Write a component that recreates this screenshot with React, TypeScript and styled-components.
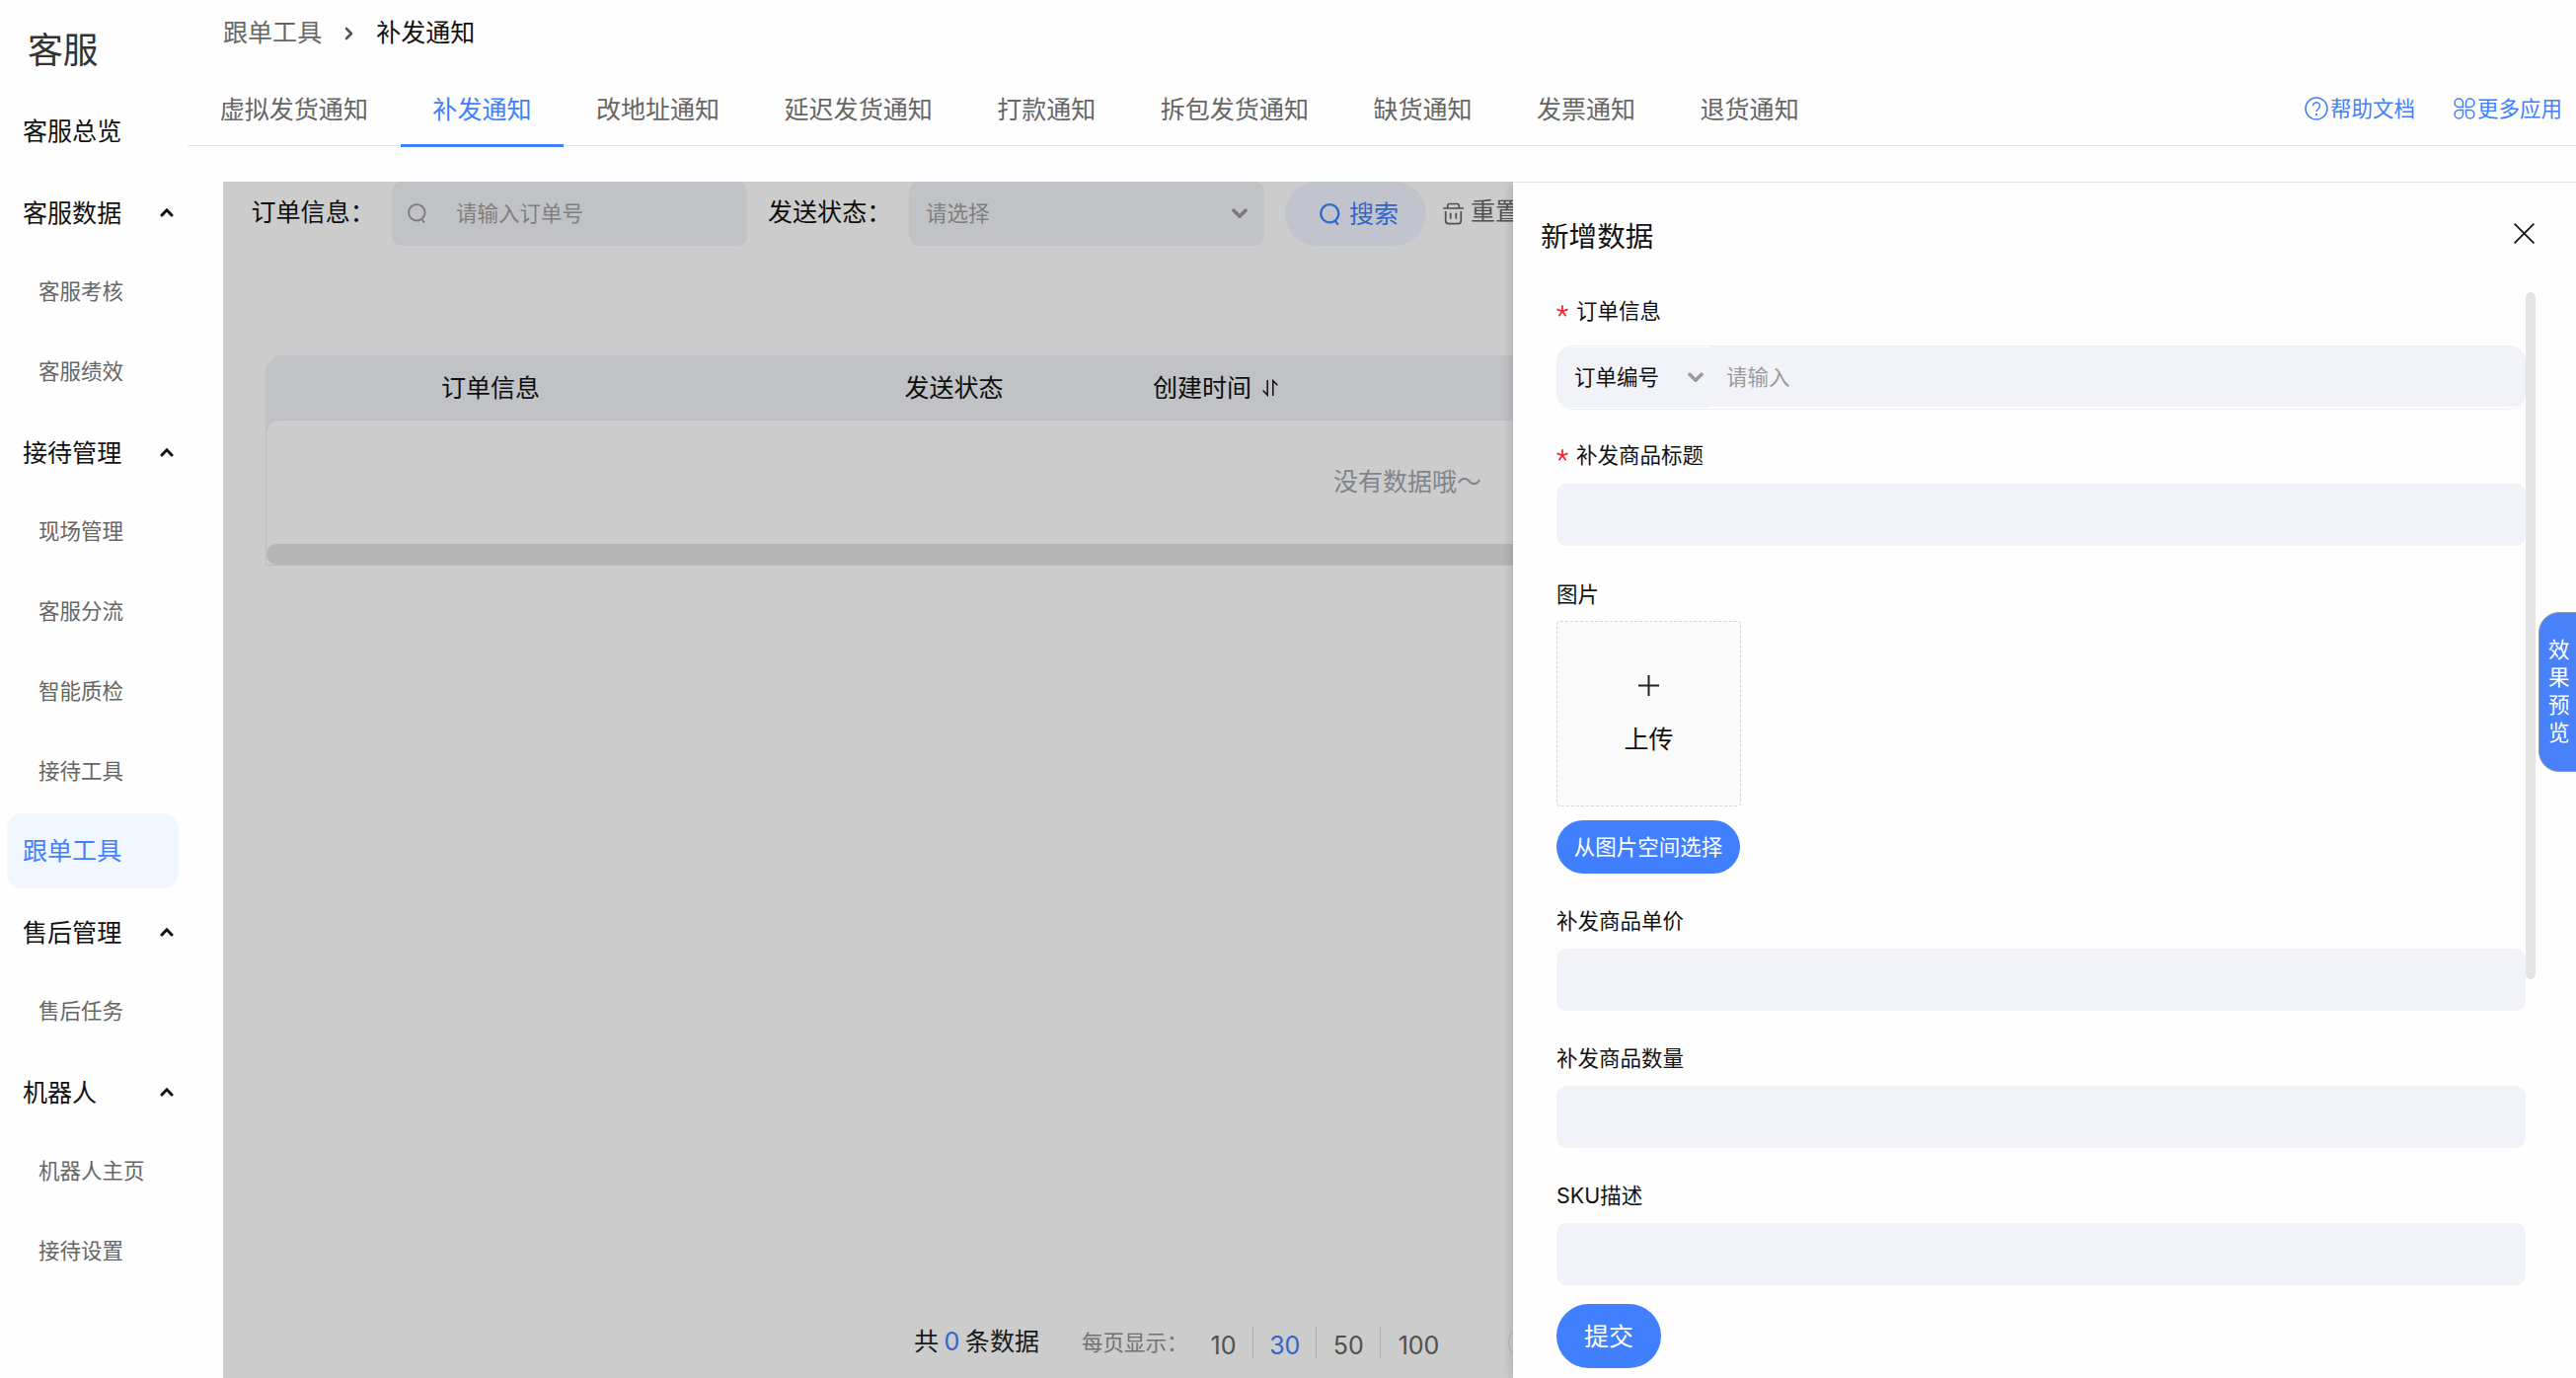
import React from "react";
import styled, { createGlobalStyle } from "styled-components";

const BLUE = "#4080ff";
const INK = "#111111";
const FIELD = "#f2f3f8";

const GlobalStyle = createGlobalStyle`
  * { box-sizing: border-box; }
  html, body { margin: 0; padding: 0; background: #fff; }
  body {
    font-family: Inter, "Noto Sans CJK SC", sans-serif;
    line-height: 1.4;
    color: ${INK};
    overflow: hidden;
  }
  button { font-family: inherit; line-height: inherit; border: 0; padding: 0; }
  svg { display: block; flex: none; }
`;

const Page = styled.div`
  position: relative;
  display: flex;
  width: 2610px;
  height: 1396px;
  background: #fefefe;
  overflow: hidden;
`;

/* ---------- sidebar ---------- */

const Sidebar = styled.aside`
  width: 190px;
  flex: none;
  padding-left: 7px;
`;

const SidebarTitle = styled.h1`
  margin: 0;
  height: 92.5px;
  padding-left: 21px;
  font-size: 35.8px;
  font-weight: 400;
  line-height: 102px;
  color: #333;
`;

const navPadding = {
  top: "2px 0 0 16px",
  group: "5px 5px 0 16px",
  leaf: "0 0 0 32px",
  active: "1px 0 0 16px",
};

const NavItem = styled.div<{ $kind: "top" | "group" | "leaf" | "active" }>`
  display: flex;
  align-items: center;
  justify-content: space-between;
  width: 174px;
  height: 76px;
  margin: 2.52px 0;
  padding: ${(p) => navPadding[p.$kind]};
  border-radius: 16px;
  white-space: nowrap;
  font-size: ${(p) => (p.$kind === "leaf" ? "21.5px" : "25.06px")};
  color: ${(p) => (p.$kind === "leaf" ? "#666" : p.$kind === "active" ? BLUE : INK)};
  background: ${(p) => (p.$kind === "active" ? "#f2f6ff" : "transparent")};
  svg { margin-top: -4px; }
`;

const NavList = styled.nav`
  display: flex;
  flex-direction: column;
`;

/* ---------- header ---------- */

const Main = styled.main`
  flex: 1;
  min-width: 0;
  display: flex;
  flex-direction: column;
`;

const Breadcrumb = styled.div`
  display: flex;
  align-items: center;
  height: 68px;
  padding-left: 36px;
  font-size: 25.06px;
  color: #666;
`;

const Crumb = styled.span<{ $current?: boolean }>`
  color: ${(p) => (p.$current ? INK : "#666")};
`;

const CrumbArrow = styled.span`
  width: 55px;
  display: flex;
  justify-content: center;
`;

const TabBar = styled.div`
  display: flex;
  align-items: flex-start;
  height: 80px;
  border-bottom: 1px solid #e5e6e8;
`;

const Tab = styled.div<{ $active?: boolean }>`
  height: 81px;
  padding: 0 32.7px;
  line-height: 87px;
  font-size: 25.06px;
  white-space: nowrap;
  color: ${(p) => (p.$active ? BLUE : "#666")};
  border-bottom: 3px solid ${(p) => (p.$active ? BLUE : "transparent")};
`;

const Links = styled.div`
  display: flex;
  gap: 39px;
  margin-left: auto;
  padding-right: 14px;
`;

const HelpLink = styled.a`
  display: flex;
  align-items: center;
  gap: 2px;
  height: 84px;
  font-size: 21.5px;
  white-space: nowrap;
  color: ${BLUE};
`;

/* ---------- workspace ---------- */

const Workspace = styled.section`
  position: relative;
  flex: 1;
  margin: 36px 0 0 36px;
  display: flex;
  flex-direction: column;
  overflow: hidden;
  background: #fff;
`;

const Filters = styled.div`
  display: flex;
  align-items: flex-start;
  height: 176px;
  padding-left: 28.5px;
  white-space: nowrap;
`;

const FilterLabel = styled.label<{ $width: number }>`
  width: ${(p) => p.$width}px;
  line-height: 63px;
  font-size: 25.06px;
`;

const FilterInput = styled.div<{ $select?: boolean }>`
  display: flex;
  align-items: center;
  justify-content: ${(p) => (p.$select ? "space-between" : "flex-start")};
  gap: 30px;
  width: 360px;
  height: 65px;
  margin-right: 21px;
  padding: 0 17px 0 ${(p) => (p.$select ? 17 : 16)}px;
  border-radius: 10px;
  font-size: 21.5px;
  background: ${FIELD};
  color: #9f9f9f;
`;

const SearchButton = styled.button`
  display: flex;
  align-items: center;
  justify-content: center;
  gap: 9px;
  width: 143px;
  height: 65px;
  padding: 1px 0 0 7px;
  border-radius: 33px;
  font-size: 25px;
  background: #f2f6ff;
  color: ${BLUE};
`;

const ResetButton = styled.button`
  display: flex;
  align-items: center;
  gap: 7px;
  height: 61px;
  margin-left: 17px;
  font-size: 25px;
  color: #666;
  background: none;
  svg { margin-top: 3px; }
`;

const Table = styled.div`
  width: 2314px;
  margin-left: 43px;
  border-radius: 18px 18px 0 0;
  background: ${FIELD};
`;

const HeadRow = styled.div`
  display: grid;
  grid-template-columns: 543px 309px 221px;
  height: 65px;
  padding-top: 2px;
  align-items: center;
  font-size: 25.06px;
`;

const HeadCell = styled.div`
  display: flex;
  align-items: center;
  justify-content: center;
  gap: 11px;
  white-space: nowrap;
  &:first-child { padding-right: 87px; }
`;

const TableBody = styled.div`
  display: flex;
  flex-direction: column;
  justify-content: space-between;
  height: 148px;
  border: 1px solid #ededf2;
  border-radius: 14px 14px 0 0;
  background: #fff;
`;

const EmptyText = styled.div`
  text-align: center;
  line-height: 125px;
  font-size: 25px;
  color: #a3a5b0;
`;

const ScrollThumb = styled.div`
  height: 21px;
  border-radius: 11px;
  background: #e3e3e3;
`;

const Pager = styled.div`
  display: flex;
  align-items: center;
  margin-top: auto;
  height: 36px;
  margin-bottom: 18px;
  padding-left: 700px;
  white-space: nowrap;
`;

const Total = styled.div`
  width: 170px;
  font-size: 25.06px;
  color: #222;
  em { font-style: normal; color: ${BLUE}; margin: 0 5.5px; }
`;

const PageSizeLabel = styled.div`
  width: 113.5px;
  font-size: 21.5px;
  color: #8f8f8f;
`;

const PageSize = styled.div<{ $width: number; $active?: boolean; $last?: boolean }>`
  width: ${(p) => p.$width}px;
  height: 32px;
  padding: 2px 0 0 1px;
  line-height: 34px;
  text-align: center;
  font-size: 25px;
  color: ${(p) => (p.$active ? BLUE : "#666")};
  border-right: 1px solid ${(p) => (p.$last ? "transparent" : "#dcdcdc")};
`;

const PageButton = styled.div`
  width: 36px;
  height: 36px;
  margin-left: 51px;
  border: 1px solid #e8e8e8;
  border-radius: 50%;
`;

const Mask = styled.div`
  position: absolute;
  inset: 0;
  background: rgba(0, 0, 0, 0.2);
`;

/* ---------- drawer ---------- */

const Drawer = styled.section`
  position: absolute;
  top: 0;
  right: 0;
  bottom: 0;
  width: 1077px;
  border-top: 1px solid #e5e6e8;
  background: #fefefe;
  box-shadow: -2px 0 10px rgba(0, 0, 0, 0.14);
`;

const DrawerHead = styled.header`
  display: flex;
  align-items: center;
  justify-content: space-between;
  height: 111px;
  padding: 0 42px 0 28px;
  font-size: 28.6px;
  svg { margin-top: -8px; }
`;

const DrawerBody = styled.div`
  display: grid;
  grid-template-columns: 982px 10px;
  padding-left: 44px;
`;

const DrawerThumb = styled.div`
  height: 696px;
  border-radius: 5px;
  background: #e3e3e3;
`;

const Form = styled.form`
  display: flex;
  flex-direction: column;
  align-items: flex-start;
`;

const Field = styled.div<{ $before?: number }>`
  width: 100%;
  margin-top: ${(p) => p.$before ?? 0}px;
`;

const Label = styled.label<{ $after: number }>`
  display: flex;
  align-items: center;
  height: 40px;
  padding-bottom: 2px;
  margin-bottom: ${(p) => p.$after}px;
  font-size: 21.5px;
  white-space: nowrap;
`;

const Required = styled.span`
  width: 20px;
  flex: none;
  svg { margin-top: -1px; }
`;

const TextBox = styled.div`
  height: 63px;
  border-radius: 10px;
  background: ${FIELD};
`;

const Combo = styled.div`
  display: flex;
  height: 65px;
  border: 1px solid #eeeff5;
  border-radius: 16px;
  font-size: 21.5px;
  background: #fff;
  overflow: hidden;
`;

const ComboSelect = styled.div`
  display: flex;
  align-items: center;
  justify-content: space-between;
  width: 154px;
  height: 61px;
  margin-top: 1px;
  padding: 0 6px 0 17px;
  background: ${FIELD};
`;

const ComboInput = styled.div`
  flex: 1;
  height: 61px;
  padding-left: 17px;
  line-height: 63px;
  border-radius: 0 12px 12px 0;
  background: ${FIELD};
  color: #9c9c9c;
`;

const Upload = styled.div`
  display: flex;
  flex-direction: column;
  align-items: center;
  gap: 25px;
  width: 187px;
  height: 188px;
  padding-top: 54px;
  border: 1px dashed #d6d6d6;
  border-radius: 4px;
  background: #fafafa;
  font-size: 25px;
  line-height: 38px;
`;

const PrimaryButton = styled.button<{ $large?: boolean }>`
  display: block;
  width: ${(p) => (p.$large ? 106 : 186)}px;
  height: ${(p) => (p.$large ? 65 : 54)}px;
  margin-top: ${(p) => (p.$large ? 19 : 14)}px;
  padding-top: ${(p) => (p.$large ? 1 : 0)}px;
  border-radius: 33px;
  white-space: nowrap;
  font-size: ${(p) => (p.$large ? 25 : 21.5)}px;
  color: #fff;
  background: ${BLUE};
`;

const PreviewHandle = styled.div`
  position: absolute;
  right: -1px;
  top: 620px;
  width: 39px;
  height: 162px;
  padding: 23px 8px 0 9px;
  border: 1px solid #8f99a8;
  border-radius: 21px 0 0 21px;
  font-size: 21.5px;
  line-height: 28px;
  color: #fff;
  background: #4881fa;
  word-break: break-all;
`;

/* ---------- icons ---------- */

const UpArrow = () => (
  <svg width="14" height="10" viewBox="0 0 14 10" fill="none">
    <path d="M2 8l5-5.2L12 8" stroke="#111" strokeWidth="3" strokeLinecap="round" />
  </svg>
);

const DownArrow = () => (
  <svg width="16" height="11" viewBox="0 0 16 11" fill="none">
    <path d="M2 2.2l6 6 6-6" stroke="#9a9a9a" strokeWidth="3.6" strokeLinecap="round" strokeLinejoin="round" />
  </svg>
);

const RightArrow = () => (
  <svg width="10" height="14" viewBox="0 0 10 14" fill="none">
    <path d="M2 2l5 5-5 5" stroke="#555" strokeWidth="2.6" strokeLinecap="round" strokeLinejoin="round" />
  </svg>
);

const SearchIcon = ({ size, color, stroke }: { size: number; color: string; stroke: number }) => (
  <svg width={size} height={size * 1.06} viewBox="0 0 21 22.3" fill="none" stroke={color} strokeWidth={stroke}>
    <circle cx="10.3" cy="10.3" r="9.1" />
    <path d="M15.2 17.2l3.6 4.6" />
  </svg>
);

const TrashIcon = () => (
  <svg width="21" height="23" viewBox="0 0 21 23" fill="none" stroke="#666" strokeWidth="1.7">
    <path d="M0 6h21M4.7 6V3.6Q4.7 1.5 6.8 1.5h7.4Q16.3 1.5 16.3 3.6V6M2.7 9v9.6Q2.7 21.7 5.7 21.7h9.6Q18.3 21.7 18.3 18.6V9M7.7 10.8v6M13.3 10.8v6" />
  </svg>
);

const SortIcon = () => (
  <svg width="16" height="18" viewBox="0 0 16 18" fill="none" stroke="#111" strokeWidth="1.5">
    <path d="M5.2 1v15.3L.6 11.6M10.8 17V1.7L15.4 6.2" />
  </svg>
);

const HelpIcon = () => (
  <svg width="24" height="24" viewBox="0 0 24 24" fill="none" stroke={BLUE} strokeWidth="1.5">
    <circle cx="12" cy="12" r="11" />
    <path d="M8.5 9.3a3.5 3.5 0 1 1 5.7 2.7c-1.3 1-2.2 1.5-2.2 3.2" />
    <path d="M12 17v2" strokeWidth="1.9" />
  </svg>
);

const AppsIcon = () => (
  <svg width="22" height="22" viewBox="0 0 22 22" fill="none" stroke={BLUE} strokeWidth="1.5">
    <path d="M9.5 9.5H5.2A4.2 4.2 0 1 1 9.5 5.2zM12.5 9.5V5.2a4.2 4.2 0 1 1 4.3 4.3zM9.5 12.5v4.3a4.2 4.2 0 1 1-4.3-4.3zM12.5 12.5h4.3a4.2 4.2 0 1 1-4.3 4.3z" />
  </svg>
);

const CloseIcon = () => (
  <svg width="21" height="21" viewBox="0 0 21 21" stroke="#111" strokeWidth="1.7">
    <path d="M.6.6l19.8 19.8M20.4.6L.6 20.4" />
  </svg>
);

const PlusIcon = () => (
  <svg width="21" height="21" viewBox="0 0 21 21" stroke="#222" strokeWidth="2">
    <path d="M0 10.5h21M10.5 0v21" />
  </svg>
);

const StarIcon = () => (
  <svg width="12" height="12" viewBox="0 0 12 12" stroke="#f5222d" strokeWidth="1.7" fill="none">
    <path d="M6 6.3V.3M6 6.3L.4 4.4M6 6.3l5.6-1.9M6 6.3l-3.5 5M6 6.3l3.5 5" />
  </svg>
);

/* ---------- data ---------- */

const nav: { text: string; kind: "top" | "group" | "leaf" | "active" }[] = [
  { text: "客服总览", kind: "top" },
  { text: "客服数据", kind: "group" },
  { text: "客服考核", kind: "leaf" },
  { text: "客服绩效", kind: "leaf" },
  { text: "接待管理", kind: "group" },
  { text: "现场管理", kind: "leaf" },
  { text: "客服分流", kind: "leaf" },
  { text: "智能质检", kind: "leaf" },
  { text: "接待工具", kind: "leaf" },
  { text: "跟单工具", kind: "active" },
  { text: "售后管理", kind: "group" },
  { text: "售后任务", kind: "leaf" },
  { text: "机器人", kind: "group" },
  { text: "机器人主页", kind: "leaf" },
  { text: "接待设置", kind: "leaf" },
];

const tabs = [
  "虚拟发货通知",
  "补发通知",
  "改地址通知",
  "延迟发货通知",
  "打款通知",
  "拆包发货通知",
  "缺货通知",
  "发票通知",
  "退货通知",
];

const pageSizes = [
  { value: 10, width: 60 },
  { value: 30, width: 64.5 },
  { value: 50, width: 64.5 },
  { value: 100, width: 78 },
];

export default function App() {
  return (
    <Page>
      <GlobalStyle />
      <Sidebar>
        <SidebarTitle>客服</SidebarTitle>
        <NavList>
          {nav.map((n) => (
            <NavItem key={n.text} $kind={n.kind}>
              <span>{n.text}</span>
              {n.kind === "group" && <UpArrow />}
            </NavItem>
          ))}
        </NavList>
      </Sidebar>

      <Main>
        <Breadcrumb>
          <Crumb>跟单工具</Crumb>
          <CrumbArrow>
            <RightArrow />
          </CrumbArrow>
          <Crumb $current>补发通知</Crumb>
        </Breadcrumb>
        <TabBar>
          {tabs.map((t) => (
            <Tab key={t} $active={t === "补发通知"}>
              {t}
            </Tab>
          ))}
          <Links>
            <HelpLink>
              <HelpIcon />
              帮助文档
            </HelpLink>
            <HelpLink>
              <AppsIcon />
              更多应用
            </HelpLink>
          </Links>
        </TabBar>

        <Workspace>
          <Filters>
            <FilterLabel $width={142.5}>订单信息：</FilterLabel>
            <FilterInput>
              <SearchIcon size={19} color="#9a9a9a" stroke={2} />
              请输入订单号
            </FilterInput>
            <FilterLabel $width={143}>发送状态：</FilterLabel>
            <FilterInput $select>
              请选择
              <DownArrow />
            </FilterInput>
            <SearchButton>
              <SearchIcon size={21} color={BLUE} stroke={2.3} />
              搜索
            </SearchButton>
            <ResetButton>
              <TrashIcon />
              重置
            </ResetButton>
          </Filters>

          <Table>
            <HeadRow>
              <HeadCell>订单信息</HeadCell>
              <HeadCell>发送状态</HeadCell>
              <HeadCell>
                创建时间
                <SortIcon />
              </HeadCell>
            </HeadRow>
            <TableBody>
              <EmptyText>没有数据哦～</EmptyText>
              <ScrollThumb />
            </TableBody>
          </Table>

          <Pager>
            <Total>
              共<em>0</em>条数据
            </Total>
            <PageSizeLabel>每页显示：</PageSizeLabel>
            {pageSizes.map((s) => (
              <PageSize key={s.value} $width={s.width} $active={s.value === 30} $last={s.value === 100}>
                {s.value}
              </PageSize>
            ))}
            <PageButton />
          </Pager>

          <Mask />

          <Drawer>
            <DrawerHead>
              新增数据
              <CloseIcon />
            </DrawerHead>
            <DrawerBody>
              <Form>
                <Field>
                  <Label $after={14}>
                    <Required>
                      <StarIcon />
                    </Required>
                    订单信息
                  </Label>
                  <Combo>
                    <ComboSelect>
                      订单编号
                      <DownArrow />
                    </ComboSelect>
                    <ComboInput>请输入</ComboInput>
                  </Combo>
                </Field>
                <Field $before={27}>
                  <Label $after={8}>
                    <Required>
                      <StarIcon />
                    </Required>
                    补发商品标题
                  </Label>
                  <TextBox />
                </Field>
                <Field $before={30}>
                  <Label $after={6}>图片</Label>
                  <Upload>
                    <PlusIcon />
                    上传
                  </Upload>
                  <PrimaryButton type="button">从图片空间选择</PrimaryButton>
                </Field>
                <Field $before={29}>
                  <Label $after={7}>补发商品单价</Label>
                  <TextBox />
                </Field>
                <Field $before={29}>
                  <Label $after={7}>补发商品数量</Label>
                  <TextBox />
                </Field>
                <Field $before={29}>
                  <Label $after={7}>SKU描述</Label>
                  <TextBox />
                </Field>
                <PrimaryButton $large type="button">
                  提交
                </PrimaryButton>
              </Form>
              <DrawerThumb />
            </DrawerBody>
          </Drawer>
        </Workspace>
      </Main>

      <PreviewHandle>效果预览</PreviewHandle>
    </Page>
  );
}
